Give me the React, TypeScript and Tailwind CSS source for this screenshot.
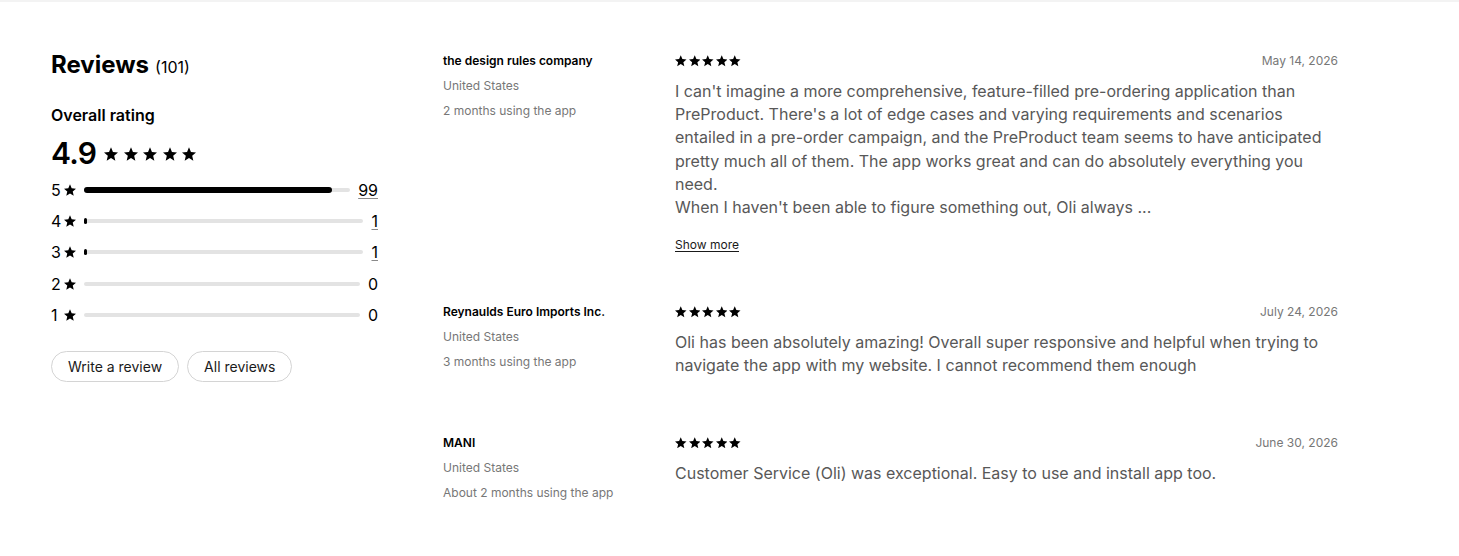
import React from "react";

type Review = {
  author: string;
  country: string;
  usage: string;
  date: string;
  body: string[];
  more?: boolean;
};

const reviews: Review[] = [
  {
    author: "the design rules company",
    country: "United States",
    usage: "2 months using the app",
    date: "May 14, 2026",
    body: [
      "I can't imagine a more comprehensive, feature-filled pre-ordering application than PreProduct. There's a lot of edge cases and varying requirements and scenarios entailed in a pre-order campaign, and the PreProduct team seems to have anticipated pretty much all of them. The app works great and can do absolutely everything you need.",
      "When I haven't been able to figure something out, Oli always ...",
    ],
    more: true,
  },
  {
    author: "Reynaulds Euro Imports Inc.",
    country: "United States",
    usage: "3 months using the app",
    date: "July 24, 2026",
    body: [
      "Oli has been absolutely amazing! Overall super responsive and helpful when trying to navigate the app with my website. I cannot recommend them enough",
    ],
  },
  {
    author: "MANI",
    country: "United States",
    usage: "About 2 months using the app",
    date: "June 30, 2026",
    body: ["Customer Service (Oli) was exceptional. Easy to use and install app too."],
  },
];

const breakdown = [
  { stars: 5, count: 99, pct: 93 },
  { stars: 4, count: 1, pct: 1 },
  { stars: 3, count: 1, pct: 1 },
  { stars: 2, count: 0, pct: 0 },
  { stars: 1, count: 0, pct: 0 },
];

function Star({ className }: { className: string }) {
  return (
    <svg viewBox="2 2 20 19" className={className} fill="currentColor">
      <path d="M12 17.27L18.18 21l-1.64-7.03L22 9.24l-7.19-.61L12 2 9.19 8.63 2 9.24l5.46 4.73L5.82 21z" />
    </svg>
  );
}

function Summary() {
  return (
    <div className="w-[327px] shrink-0">
      <h2 className="flex items-baseline gap-1.5 text-[#000]">
        <span className="text-[24px] font-bold leading-8">Reviews</span>
        <span className="text-[16px]">(101)</span>
      </h2>
      <div className="mt-[22px] text-[16px] font-semibold leading-6">Overall rating</div>
      <div className="mt-[6px] flex items-center gap-[8px]">
        <span className="text-[30px] font-semibold leading-10 tracking-tight">4.9</span>
        <div className="mt-0.5 flex items-center gap-[5.5px]">
          {[0, 1, 2, 3, 4].map((i) => (
            <Star key={i} className="h-[14px] w-[14px]" />
          ))}
        </div>
      </div>
      <div className="mt-[1px] flex flex-col">
        {breakdown.map((row) => (
          <div key={row.stars} className="flex h-[31.3px] items-center">
            <span className="w-[13px] text-[16px]">{row.stars}</span>
            <Star className="h-[12px] w-[12px]" />
            <div className="ml-[8px] mr-[8px] h-[4px] flex-1 rounded-full bg-[#e3e3e3]">
              {row.pct > 0 && (
                <div
                  className="-mt-px h-[6px] min-w-[3px] rounded-full bg-black"
                  style={{ width: `${row.pct}%` }}
                />
              )}
            </div>
            <span
              className={`text-right text-[16px] ${
                row.count > 0 ? "underline decoration-[#8a8a8a] underline-offset-2" : ""
              }`}
            >
              {row.count}
            </span>
          </div>
        ))}
      </div>
      <div className="mt-[21px] flex gap-2">
        <button className="h-[31px] rounded-full border border-[#d4d4d4] px-4 text-[14px] text-[#1a1a1a]">
          Write a review
        </button>
        <button className="h-[31px] rounded-full border border-[#d4d4d4] px-4 text-[14px] text-[#1a1a1a]">
          All reviews
        </button>
      </div>
    </div>
  );
}

function ReviewRow({ review }: { review: Review }) {
  return (
    <div className="flex pb-[57px]">
      <div className="w-[232px] shrink-0">
        <div className="text-[12px] font-semibold leading-4 text-black">{review.author}</div>
        <div className="mt-[9px] text-[12px] leading-4 text-[#777]">{review.country}</div>
        <div className="mt-[9px] text-[12px] leading-4 text-[#777]">{review.usage}</div>
      </div>
      <div className="w-[663px]">
        <div className="flex h-4 items-center justify-between">
          <div className="flex items-center gap-[2px]">
            {[0, 1, 2, 3, 4].map((i) => (
              <Star key={i} className="h-[11.5px] w-[11.5px]" />
            ))}
          </div>
          <span className="text-[12px] text-[#777]">{review.date}</span>
        </div>
        <div className="mt-[11px] text-[16px] leading-[23.2px] text-[#585858]">
          {review.body.map((p, i) => (
            <p key={i}>{p}</p>
          ))}
        </div>
        {review.more && (
          <button className="-mb-[6px] mt-[18px] block text-[12px] leading-4 text-[#1a1a1a] underline underline-offset-2">
            Show more
          </button>
        )}
      </div>
    </div>
  );
}

export default function App() {
  return (
    <div
      className="min-h-[556px] border-t-2 border-[#f3f3f3] bg-white text-black"
      style={{ fontFamily: "Inter, 'Noto Sans', sans-serif" }}
    >
      <div className="flex gap-[65px] pl-[51px] pt-[47px]">
        <Summary />
        <div className="flex flex-col pt-[4px]">
          {reviews.map((r) => (
            <ReviewRow key={r.author} review={r} />
          ))}
        </div>
      </div>
    </div>
  );
}
